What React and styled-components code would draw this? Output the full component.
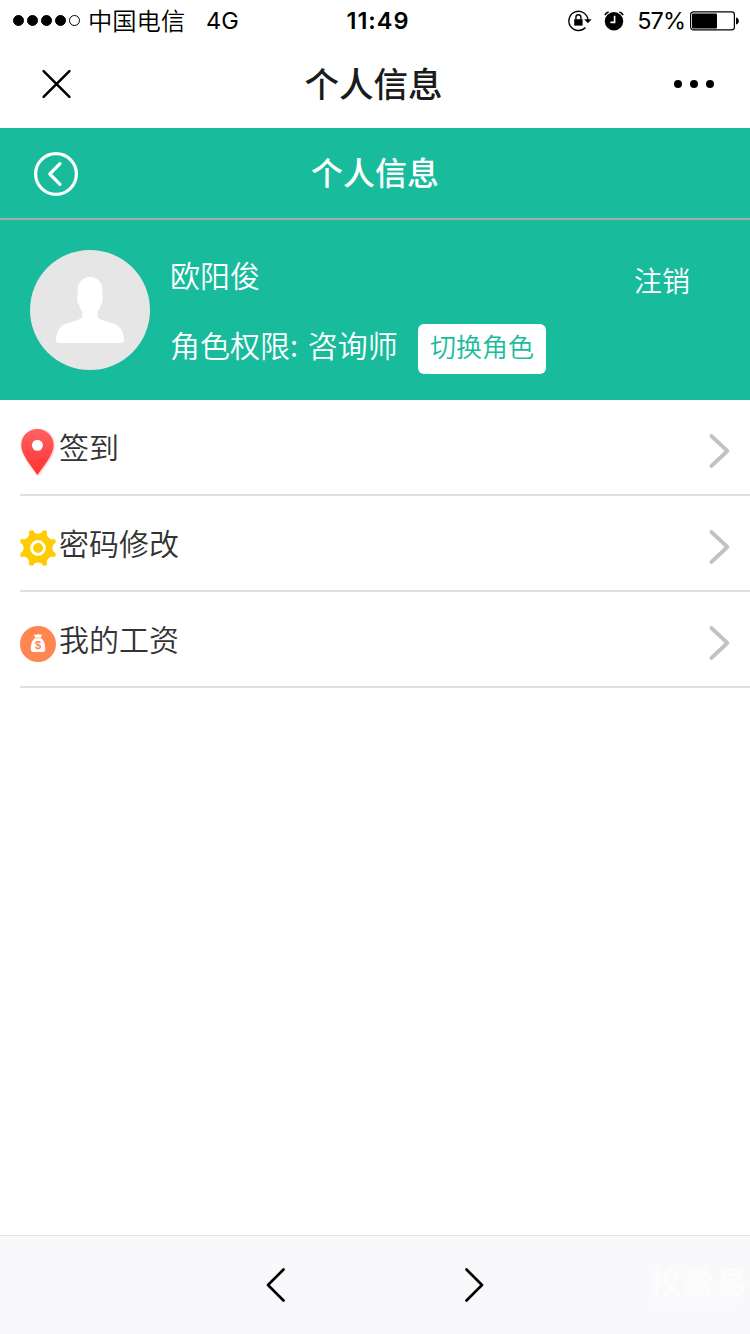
import React from "react";
import styled, { createGlobalStyle } from "styled-components";

const Global = createGlobalStyle`
  *, *::before, *::after { box-sizing: border-box; }
  body { margin: 0; background: #fff; }
  button { font: inherit; color: inherit; border: 0; padding: 0; margin: 0; background: none; cursor: pointer; }
  svg { display: block; flex: none; overflow: visible; }
`;

const Screen = styled.main`
  display: flex;
  flex-direction: column;
  width: 750px;
  height: 1334px;
  overflow: hidden;
  background: #fff;
  color: #333;
  font-family: "Noto Sans CJK SC", sans-serif;
  font-weight: 350;
`;

const StatusBar = styled.header`
  display: grid;
  grid-template-columns: 1fr auto 1fr;
  align-items: center;
  height: 40px;
  padding: 0 11px 0 13px;
  color: #000;
  font-family: Inter, "Noto Sans CJK SC", sans-serif;
  font-size: 24px;
  line-height: 40px;
`;

const StatusGroup = styled.div`
  display: flex;
  align-items: center;
  height: 40px;
  justify-content: ${(p) => (p.$end ? "flex-end" : "flex-start")};
`;

const Signal = styled.div`
  display: flex;
  gap: 3px;
  margin-right: 8px;
`;

const SignalDot = styled.i`
  width: 11px;
  height: 11px;
  border: 1px solid #000;
  border-radius: 50%;
  background: ${(p) => (p.$on ? "#000" : "transparent")};
`;

const Carrier = styled.span`
  width: 98px;
  height: 40px;
  margin-right: 20px;
  font-family: "Noto Sans CJK SC", sans-serif;
  font-size: 24.3px;
  line-height: 38px;
  white-space: nowrap;
`;

const Network = styled.span`
  font-size: 23.5px;
  padding-top: 1px;
  font-weight: 400;
`;

const Clock = styled.time`
  padding: 1px 0 0 4px;
  font-size: 23.5px;
  font-weight: 600;
  letter-spacing: 1px;
`;

const Percent = styled.span`
  margin: 1px 5px 0 13px;
  font-size: 23.5px;
  font-weight: 400;
  letter-spacing: -1px;
`;

const NavBar = styled.nav`
  display: flex;
  align-items: center;
  justify-content: space-between;
  height: 88px;
  padding: 0 36px 0 42px;
  color: #000;
`;

const NavTitle = styled.h1`
  margin: 0;
  padding-left: 2px;
  color: #1a1b1b;
  font-size: 34.5px;
  font-weight: 500;
  line-height: 85px;
  height: 88px;
`;

const PageHeader = styled.header`
  display: grid;
  grid-template-columns: 44px 1fr 44px;
  align-items: center;
  height: 92px;
  padding: 0 34px;
  border-bottom: 2px solid #a9a9a9;
  background: #18bc9c;
  color: #fff;
`;

const PageTitle = styled.h2`
  margin: 0;
  height: 90px;
  font-size: 32px;
  font-weight: 500;
  line-height: 87px;
  text-align: center;
`;

const BackButton = styled.button`
  width: 44px;
  height: 44px;
  margin-top: 2px;
`;

const Profile = styled.section`
  display: flex;
  align-items: flex-start;
  height: 180px;
  padding: 30px 60px 0 30px;
  background: #18bc9c;
  color: #fff;
  font-size: 30px;
`;

const Avatar = styled.div`
  width: 120px;
  height: 120px;
  margin-right: 20px;
  border-radius: 50%;
  background: #e6e6e6;
`;

const Details = styled.div`
  flex: 1;
  display: flex;
  flex-direction: column;
  gap: 24px;
`;

const Name = styled.div`
  height: 50px;
  line-height: 48px;
`;

const RoleLine = styled.div`
  display: flex;
  height: 50px;
  line-height: 40px;
`;

const RoleText = styled.span`
  width: 248px;
  word-spacing: 3px;
  white-space: nowrap;
`;

const SwitchRole = styled.button`
  width: 128px;
  height: 50px;
  border-radius: 6px;
  background: #fff;
  color: #18bc9c;
  font-size: 26px;
  line-height: 44px;
  padding-bottom: 6px;
`;

const Logout = styled.button`
  margin-top: 10px;
  height: 40px;
  font-size: 28px;
  line-height: 40px;
`;

const Menu = styled.ul`
  flex: 1;
  margin: 0;
  padding: 0 0 0 20px;
  list-style: none;
`;

const MenuRow = styled.li`
  display: flex;
  align-items: center;
  height: 96px;
  padding-right: 20px;
  border-bottom: 2px solid #e0e0e0;
  font-size: 30px;
`;

const RowIcon = styled.span`
  display: flex;
  width: 36px;
  margin-right: 3px;
  padding-top: 10px;
`;

const RowLabel = styled.span`
  flex: 1;
  height: 94px;
  line-height: 92px;
`;

const RowArrow = styled.span`
  padding-top: 8px;
`;

const BottomBar = styled.footer`
  display: grid;
  grid-template-columns: 1fr 178px 1fr;
  align-items: center;
  height: 99px;
  border-top: 1px solid #e3e3e5;
  background: #f9f9fb;
`;

const PageButton = styled.button`
  grid-column: ${(p) => p.$col};
  justify-self: ${(p) => p.$align};
  grid-row: 1;
`;

const Watermark = styled.div`
  grid-column: 3;
  grid-row: 1;
  justify-self: end;
  width: 100px;
  margin-top: 4px;
  color: #fcfcfd;
  font-size: 31px;
  font-weight: 900;
  line-height: 38px;
  letter-spacing: 2px;
  white-space: nowrap;
`;

const WatermarkLatin = styled.div`
  padding-left: 3px;
  font-family: Inter, sans-serif;
  font-size: 11px;
  font-weight: 400;
  line-height: 14px;
  letter-spacing: 2px;
`;

const LockIcon = () => (
  <svg width="24" height="22" viewBox="0 0 24 22" fill="none">
    <path d="M17.4 17.6A9.6 9.6 0 1 1 20 9.8" stroke="#000" strokeWidth="1.4" />
    <path d="M16.2 9.2H23.6L19.9 13.2Z" fill="#000" />
    <path d="M6.2 9.2H14.6V15.6H6.2Z" fill="#000" />
    <path d="M7.9 9.5V7.2A2.5 2.5 0 0 1 12.9 7.2V9.5" stroke="#000" strokeWidth="1.4" />
  </svg>
);

const AlarmIcon = () => (
  <svg width="20" height="20" viewBox="0 0 20 20" fill="none">
    <circle cx="10" cy="10.2" r="9.2" fill="#000" />
    <path d="M.9 4.2A6 6 0 0 1 4.6 1M19.1 4.2A6 6 0 0 0 15.4 1" stroke="#000" strokeWidth="1.6" />
    <path d="M10.6 4.8V11.4H6.4" stroke="#fff" strokeWidth="1.6" />
  </svg>
);

const BatteryIcon = () => (
  <svg width="49" height="20" viewBox="0 0 49 20" fill="none">
    <rect x=".6" y=".9" width="43.8" height="18" rx="2.8" stroke="#000" strokeWidth="1.2" />
    <rect x="2" y="2.5" width="25" height="15" rx="1" fill="#000" />
    <path d="M46 6.6Q48.8 7.2 48.8 10T46 13.4Z" fill="#000" />
  </svg>
);

const CloseIcon = () => (
  <svg width="29" height="29" viewBox="0 0 29 29">
    <path d="M1.6 1.1 27.4 26.9M27.4 1.1 1.6 26.9" stroke="#000" strokeWidth="2.5" strokeLinecap="round" />
  </svg>
);

const MoreIcon = () => (
  <svg width="40" height="8" viewBox="0 0 40 8">
    <circle cx="4" cy="4" r="4" />
    <circle cx="20" cy="4" r="4" />
    <circle cx="36" cy="4" r="4" />
  </svg>
);

const BackIcon = () => (
  <svg width="44" height="44" viewBox="0 0 44 44" fill="none" stroke="#fff">
    <circle cx="22" cy="22" r="20.4" strokeWidth="3.2" />
    <path d="M26 11.7 15.8 22 26 32.3" strokeWidth="3.2" strokeLinecap="round" strokeLinejoin="round" />
  </svg>
);

const PersonIcon = () => (
  <svg width="120" height="120" viewBox="0 0 120 120">
    <path
      fill="#fff"
      d="M60 27C53 27 47.8 32 47.8 39V44.5C46.6 49 47.3 53 49.3 55C49.8 58 51 60 52.4 61.5V67.5C47 71 42 71.5 36.5 73.5C29.5 76 26 82.5 26 89.5Q26 93 29.5 93H90.5Q94 93 94 89.5C94 82.5 90.5 76 83.5 73.5C78 71.5 73 71 67.6 67.5V61.5C69 60 70.2 58 70.7 55C72.7 53 73.4 49 72.2 44.5V39C72.2 32 67 27 60 27Z"
    />
  </svg>
);

const PinIcon = () => (
  <svg width="36" height="48" viewBox="0 0 36 48">
    <defs>
      <linearGradient id="pin" x1="0" y1="0" x2="0" y2="1">
        <stop offset="0" stopColor="#ff6262" />
        <stop offset="1" stopColor="#ff3030" />
      </linearGradient>
      <filter id="pinShadow" x="-20%" y="-20%" width="140%" height="140%">
        <feDropShadow dx=".6" dy=".6" stdDeviation=".9" floodColor="#ff4a3a" floodOpacity=".45" />
      </filter>
    </defs>
    <path
      d="M17.4 1C8.3 1 1.2 8 1.2 17C1.2 27 11.5 38 17.4 47C23.3 38 33.6 27 33.6 17C33.6 8 26.5 1 17.4 1Z"
      fill="url(#pin)"
      filter="url(#pinShadow)"
    />
    <circle cx="17.4" cy="17.3" r="5.5" fill="#fff" />
  </svg>
);

const GearIcon = () => (
  <svg width="36" height="36" viewBox="0 0 36 36">
    <circle cx="18" cy="18" r="13" fill="#fc0" />
    {[0, 90, 180, 270].map((angle) => (
      <path
        key={angle}
        transform={`rotate(${angle} 18 18)`}
        fill="#fc0"
        d="M18 18V3.6Q21.8 3.6 22.9 .5Q25 -.1 26.7 .9Q27.3 1.5 26.9 2.4Q25.8 5 28.4 7.6Q31 10.2 33.6 9.1Q34.5 8.7 35.1 9.3Q36.1 11 35.5 13.1Q32.4 14.2 32.4 18Z"
      />
    ))}
    <circle cx="18" cy="18" r="6.4" fill="none" stroke="#fff" strokeWidth="3" />
  </svg>
);

const DollarText = styled.text`
  font-family: "Liberation Sans", sans-serif;
  font-size: 11px;
  font-weight: 700;
`;

const MoneyIcon = () => (
  <svg width="36" height="36" viewBox="0 0 36 36">
    <circle cx="18" cy="18" r="18" fill="#ff8650" />
    <path
      d="M13.8 8.3Q16 9.4 18 8.1Q20 9.4 22.2 8.3L20.7 12C23.5 13.6 25.2 17.5 25.2 22.8Q25.2 26 22.5 26H13.5Q10.8 26 10.8 22.8C10.8 17.5 12.5 13.6 15.3 12Z"
      fill="#fff"
    />
    <path d="M15.2 11.9H20.8" stroke="#ff8650" strokeWidth=".6" />
    <DollarText x="18" y="22.9" textAnchor="middle" fill="#ff8650">$</DollarText>
  </svg>
);

const RowChevron = () => (
  <svg width="21" height="34" viewBox="0 0 21 34">
    <path d="M2.4 2 18.4 17 2.4 32" fill="none" stroke="#c2c2c2" strokeWidth="3.8" strokeLinecap="round" strokeLinejoin="round" />
  </svg>
);

const PageChevron = ({ left }) => (
  <svg width="20" height="34" viewBox="0 0 20 34">
    <path
      d={left ? "M17.5 1.5 2 17 17.5 32.5" : "M2.5 1.5 18 17 2.5 32.5"}
      fill="none"
      stroke="#000"
      strokeWidth="2.7"
      strokeLinecap="round"
      strokeLinejoin="round"
    />
  </svg>
);

const AlarmSlot = styled.span`
  margin-left: 12px;
`;

const items = [
  { label: "签到", Icon: PinIcon },
  { label: "密码修改", Icon: GearIcon },
  { label: "我的工资", Icon: MoneyIcon },
];

export default function App() {
  return (
    <>
      <Global />
      <Screen>
        <StatusBar>
          <StatusGroup>
            <Signal>
              {[1, 1, 1, 1, 0].map((on, i) => (
                <SignalDot key={i} $on={on} />
              ))}
            </Signal>
            <Carrier>中国电信</Carrier>
            <Network>4G</Network>
          </StatusGroup>
          <Clock>11:49</Clock>
          <StatusGroup $end>
            <LockIcon />
            <AlarmSlot><AlarmIcon /></AlarmSlot>
            <Percent>57%</Percent>
            <BatteryIcon />
          </StatusGroup>
        </StatusBar>
        <NavBar>
          <button aria-label="关闭"><CloseIcon /></button>
          <NavTitle>个人信息</NavTitle>
          <button aria-label="更多"><MoreIcon /></button>
        </NavBar>
        <PageHeader>
          <BackButton aria-label="返回"><BackIcon /></BackButton>
          <PageTitle>个人信息</PageTitle>
        </PageHeader>
        <Profile>
          <Avatar><PersonIcon /></Avatar>
          <Details>
            <Name>欧阳俊</Name>
            <RoleLine>
              <RoleText>角色权限: 咨询师</RoleText>
              <SwitchRole>切换角色</SwitchRole>
            </RoleLine>
          </Details>
          <Logout>注销</Logout>
        </Profile>
        <Menu>
          {items.map(({ label, Icon }) => (
            <MenuRow key={label}>
              <RowIcon><Icon /></RowIcon>
              <RowLabel>{label}</RowLabel>
              <RowArrow><RowChevron /></RowArrow>
            </MenuRow>
          ))}
        </Menu>
        <BottomBar>
          <PageButton $col={1} $align="end" aria-label="后退"><PageChevron left /></PageButton>
          <PageButton $col={3} $align="start" aria-label="前进"><PageChevron /></PageButton>
          <Watermark>
            校盈易
            <WatermarkLatin>XIAOYINGYI</WatermarkLatin>
          </Watermark>
        </BottomBar>
      </Screen>
    </>
  );
}
